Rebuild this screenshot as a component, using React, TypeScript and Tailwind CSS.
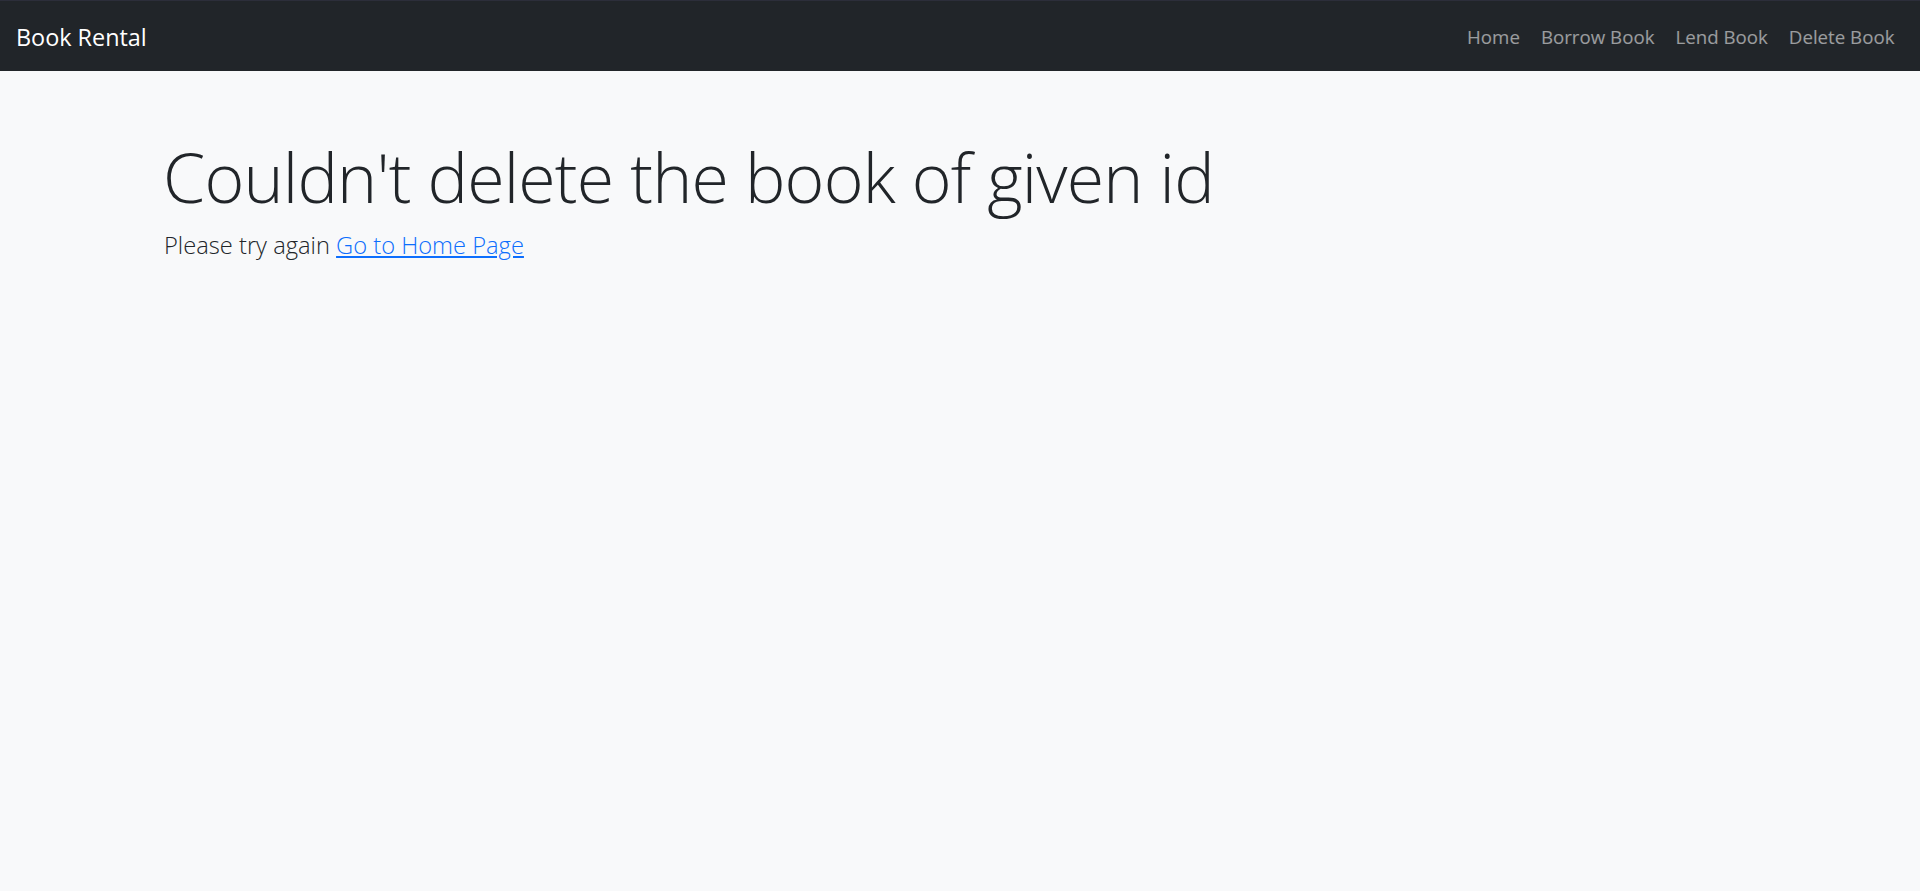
const navLinks = ["Home", "Borrow Book", "Lend Book", "Delete Book"];

export default function App() {
  return (
    <div className="min-h-[891px] bg-[#f8f9fa] font-['Open_Sans','Noto_Sans',sans-serif] text-[#212529]">
      <nav className="flex h-[71px] items-center justify-between border-t border-[#2c2e3a] bg-[#212529] pl-[16px] pr-[15px] pt-[3px]">
        <a href="#" className="text-[23.4px] leading-none text-white">
          Book Rental
        </a>
        <ul className="flex items-center">
          {navLinks.map((label) => (
            <li key={label}>
              <a href="#" className="block px-[10.5px] text-[18.7px] leading-none text-white/55">
                {label}
              </a>
            </li>
          ))}
        </ul>
      </nav>

      <main className="pl-[163px] pt-[65px]">
        <h1 className="mb-[10px] text-[68px] font-light leading-[1.2] tracking-[-0.8px]">
          Couldn't delete the book of given id
        </h1>
        <p className="ml-[1px] text-[23.7px] font-light leading-[1.5]">
          Please try again{" "}
          <a href="#" className="text-[#0d6efd] underline">
            Go to Home Page
          </a>
        </p>
      </main>
    </div>
  );
}
